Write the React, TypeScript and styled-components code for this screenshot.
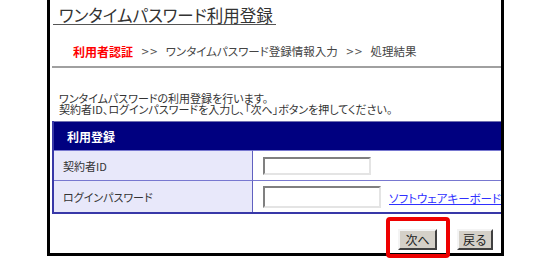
import React from "react";
import styled, { createGlobalStyle } from "styled-components";

const Global = createGlobalStyle`
  html, body { margin: 0; padding: 0; background: #fff; }
  body {
    font-family: "Noto Sans CJK JP", "Noto Sans", sans-serif;
    font-feature-settings: "palt";
    color: #333;
  }
`;

const Page = styled.div`
  position: relative;
  width: 550px;
  height: 270px;
  overflow: hidden;
`;

const Frame = styled.div`
  margin-left: 47px;
  width: 457px;
  height: 256px;
  box-sizing: border-box;
  border: 3px solid #000;
  border-top: none;
  overflow: hidden;
  display: flex;
  flex-direction: column;
`;

const Title = styled.h1`
  align-self: flex-start;
  margin: 0 0 0 3px;
  padding: 6px 3px 0 6px;
  font-size: 16.5px;
  line-height: 18px;
  font-weight: normal;
  color: #333;
  border-bottom: 1px solid #555;
`;

const Crumbs = styled.div`
  margin: 18px 0 0 23px;
  height: 16px;
  display: flex;
  align-items: center;
  gap: 8px;
  font-size: 11.5px;
  color: #444;
`;

const Current = styled.span`
  color: #ff0000;
  font-weight: bold;
  font-size: 12px;
`;

const Sep = styled.span`
  font-family: "DejaVu Sans", sans-serif;
  font-size: 10px;
  color: #555;
`;

const Rule = styled.div`
  margin: 7px 0 0 2px;
  height: 2px;
  background: #a0a0a0;
`;

const Intro = styled.p`
  margin: 25px 0 0 9px;
  font-size: 11px;
  line-height: 11px;
  color: #333;
`;

const Table = styled.div`
  margin: 6px 0 0 2px;
  width: 480px;
  display: grid;
  grid-template-columns: 199px 1fr;
  border-left: 2px solid #3838a8;
  border-bottom: 2px solid #3838a8;
`;

const Header = styled.div`
  grid-column: 1 / -1;
  height: 29px;
  box-sizing: border-box;
  background: #000080;
  border-top: 1px solid #7070b0;
  color: #fff;
  font-weight: bold;
  font-size: 12px;
  display: flex;
  align-items: center;
  padding-left: 13px;
`;

const Label = styled.div<{ $h: number }>`
  height: ${(p) => p.$h}px;
  box-sizing: border-box;
  background: #e8e8fa;
  border-top: 1px solid #7878d0;
  border-right: 1px solid #6060c0;
  display: flex;
  align-items: center;
  padding-left: 9px;
  font-size: 11px;
  color: #333;
`;

const Cell = styled.div<{ $h: number }>`
  height: ${(p) => p.$h}px;
  box-sizing: border-box;
  background: #fff;
  border-top: 1px solid #7878d0;
  display: flex;
  align-items: center;
  padding-left: 10px;
  gap: 8px;
`;

const Input = styled.input<{ $w: number; $h: number }>`
  width: ${(p) => p.$w}px;
  height: ${(p) => p.$h}px;
  box-sizing: border-box;
  margin: 0;
  padding: 0;
  border: 2px solid;
  border-color: #808080 #e4e4e4 #e4e4e4 #808080;
  background: #fff;
`;

const Link = styled.a`
  color: #3030ff;
  text-decoration: underline;
  font-size: 11.5px;
  white-space: nowrap;
  margin-top: 2px;
`;

const Actions = styled.div`
  margin-top: 15px;
  display: flex;
  justify-content: flex-end;
  gap: 20px;
  padding-right: 8px;
`;

const Button = styled.button<{ $w: number }>`
  width: ${(p) => p.$w}px;
  height: 21px;
  box-sizing: border-box;
  margin: 0;
  padding: 0;
  background: #d4d0c8;
  border: 2px solid;
  border-color: #f4f4f4 #404040 #404040 #f4f4f4;
  font-family: inherit;
  font-size: 12px;
  color: #222;
`;

const Highlight = styled.div`
  position: absolute;
  left: 386px;
  top: 217px;
  width: 64px;
  height: 41px;
  box-sizing: border-box;
  border: 4px solid #ee0000;
  border-radius: 4px;
`;

export default function App() {
  return (
    <Page>
      <Global />
      <Frame>
        <Title>ワンタイムパスワード利用登録</Title>
        <Crumbs>
          <Current>利用者認証</Current>
          <Sep>&gt;&gt;</Sep>
          <span>ワンタイムパスワード登録情報入力</span>
          <Sep>&gt;&gt;</Sep>
          <span>処理結果</span>
        </Crumbs>
        <Rule />
        <Intro>
          ワンタイムパスワードの利用登録を行います。
          <br />
          契約者ID、ログインパスワードを入力し、「次へ」ボタンを押してください。
        </Intro>
        <Table>
          <Header>利用登録</Header>
          <Label $h={30}>契約者ID</Label>
          <Cell $h={30}>
            <Input $w={108} $h={18} type="text" />
          </Cell>
          <Label $h={32}>ログインパスワード</Label>
          <Cell $h={32}>
            <Input $w={118} $h={22} type="password" />
            <Link href="#">ソフトウェアキーボード</Link>
          </Cell>
        </Table>
        <Actions>
          <Button $w={39}>次へ</Button>
          <Button $w={36}>戻る</Button>
        </Actions>
      </Frame>
      <Highlight />
    </Page>
  );
}
